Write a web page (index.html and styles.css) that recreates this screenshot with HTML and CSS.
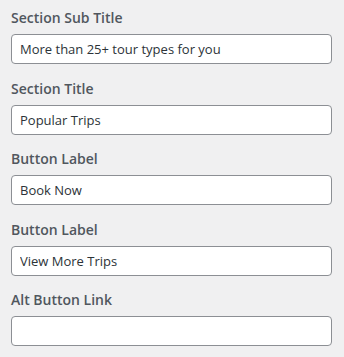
FILE: index.html
```html
<!DOCTYPE html>
<html>
<head>
<meta charset="utf-8">
<link rel="stylesheet" href="styles.css">
</head>
<body>
<div class="panel">
  <div class="field">
    <label class="label">Section Sub Title</label>
    <input class="input" type="text" value="More than 25+ tour types for you">
  </div>
  <div class="field">
    <label class="label">Section Title</label>
    <input class="input" type="text" value="Popular Trips">
  </div>
  <div class="field">
    <label class="label">Button Label</label>
    <input class="input" type="text" value="Book Now">
  </div>
  <div class="field">
    <label class="label">Button Label</label>
    <input class="input" type="text" value="View More Trips">
  </div>
  <div class="field">
    <label class="label">Alt Button Link</label>
    <input class="input" type="text" value="">
  </div>
</div>
</body>
</html>
```
FILE: styles.css
```css
html, body {
  margin: 0;
  padding: 0;
  background: #f0f0f1;
}
.panel {
  padding: 8px 12px 0 11px;
  display: flex;
  flex-direction: column;
  gap: 14.5px;
  font-family: "Open Sans", "Noto Sans", sans-serif;
}
.field {
  display: flex;
  flex-direction: column;
}
.label {
  display: block;
  font-size: 14px;
  font-weight: 600;
  line-height: 20px;
  color: #50575e;
  margin-bottom: 6px;
}
.input {
  box-sizing: border-box;
  width: 100%;
  height: 30px;
  margin: 0;
  padding: 0 8px;
  border: 1px solid #8c8f94;
  border-radius: 4px;
  background: #fff;
  color: #2c3338;
  font-family: "Open Sans", "Noto Sans", sans-serif;
  font-size: 13px;
  outline: none;
}
```
